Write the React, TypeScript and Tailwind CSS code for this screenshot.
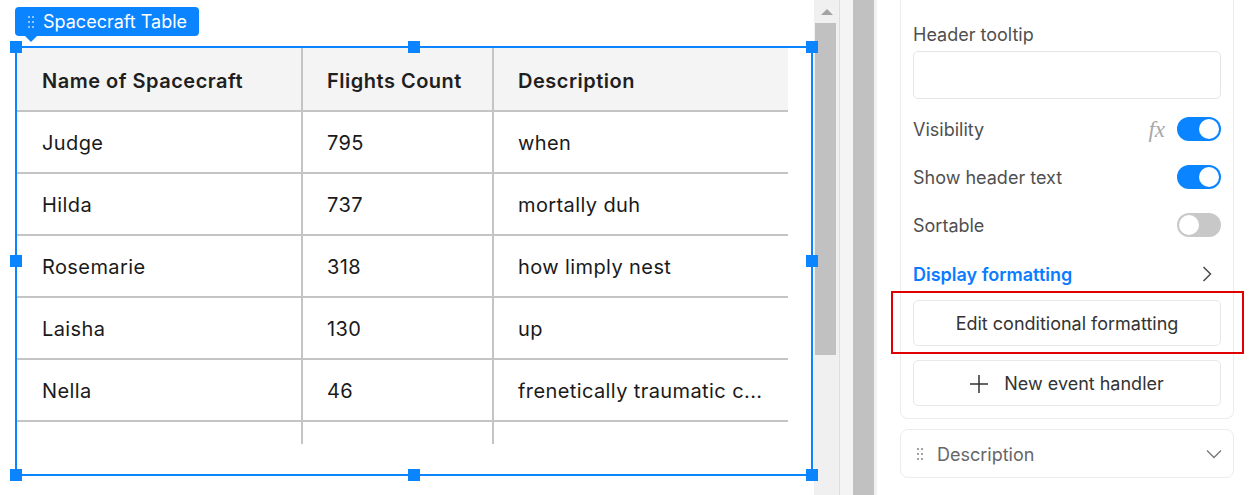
const rows = [
  { name: "Judge", count: "795", desc: "when" },
  { name: "Hilda", count: "737", desc: "mortally duh" },
  { name: "Rosemarie", count: "318", desc: "how limply nest" },
  { name: "Laisha", count: "130", desc: "up" },
  { name: "Nella", count: "46", desc: "frenetically traumatic c..." },
  { name: "", count: "", desc: "" },
];

function DragDots({ className = "" }: { className?: string }) {
  return (
    <svg width="6" height="12" viewBox="0 0 6 12" className={className}>
      {[1, 6, 11].map((y) => (
        <g key={y}>
          <circle cx="1" cy={y} r="0.9" fill="currentColor" />
          <circle cx="5" cy={y} r="0.9" fill="currentColor" />
        </g>
      ))}
    </svg>
  );
}

function Toggle({ on }: { on: boolean }) {
  return (
    <div
      className={`w-[44px] h-[24px] rounded-full flex items-center px-[2px] ${
        on ? "bg-[#0a84ff] justify-end" : "bg-[#c8c8c8] justify-start"
      }`}
    >
      <div className="w-[20px] h-[20px] rounded-full bg-white" />
    </div>
  );
}

function Handle({ className }: { className: string }) {
  return <div className={`absolute w-[12px] h-[12px] bg-[#0a84ff] ${className}`} />;
}

export default function App() {
  return (
    <div
      className="flex w-[1260px] h-[495px] overflow-hidden bg-white text-[#1a1a1a]"
      style={{ fontFamily: "Inter, 'Noto Sans', sans-serif" }}
    >
      {/* Canvas */}
      <div className="w-[814px] shrink-0 flex flex-col pl-[15px] pt-[7px]">
        {/* Component tag */}
        <div className="relative w-fit">
          <div className="h-[29px] w-[184px] rounded-[4px] bg-[#0a84ff] text-white flex items-center pl-[13px] gap-[9px] text-[18px]">
            <DragDots className="text-white/80" />
            <span>Spacecraft Table</span>
          </div>
          <div className="absolute left-[10px] top-[29px] w-0 h-0 border-l-[6px] border-r-[6px] border-t-[6px] border-l-transparent border-r-transparent border-t-[#0a84ff]" />
        </div>

        {/* Selection frame */}
        <div className="relative mt-[10px] w-[798px] h-[430px] border-2 border-[#0a84ff]">
          <div className="w-[771px] h-[396px] overflow-hidden">
            <div className="flex h-[64px] bg-[#f4f4f4] border-b-2 border-[#c4c4c4] font-semibold text-[20px] tracking-[0.025em] text-[#1f1f1f]">
              <div className="w-[286px] border-r-2 border-[#c4c4c4] flex items-center pl-[25px] pt-[3px]">
                Name of Spacecraft
              </div>
              <div className="w-[191px] border-r-2 border-[#c4c4c4] flex items-center pl-[24px] pt-[3px]">
                Flights Count
              </div>
              <div className="flex-1 flex items-center pl-[24px] pt-[3px]">Description</div>
            </div>
            {rows.map((r, i) => (
              <div key={i} className="flex h-[62px] border-b-2 border-[#c4c4c4] text-[20px] tracking-[0.02em]">
                <div className="w-[286px] border-r-2 border-[#c4c4c4] flex items-center pl-[25px] pt-[2px]">
                  {r.name}
                </div>
                <div className="w-[191px] border-r-2 border-[#c4c4c4] flex items-center pl-[24px] pt-[2px]">
                  {r.count}
                </div>
                <div className="flex-1 flex items-center pl-[24px] pt-[2px] whitespace-nowrap">{r.desc}</div>
              </div>
            ))}
          </div>
          <Handle className="-left-[7px] -top-[7px]" />
          <Handle className="left-[391px] -top-[7px]" />
          <Handle className="-right-[7px] -top-[7px]" />
          <Handle className="-left-[7px] top-[207px]" />
          <Handle className="-right-[7px] top-[207px]" />
          <Handle className="-left-[7px] -bottom-[7px]" />
          <Handle className="left-[391px] -bottom-[7px]" />
          <Handle className="-right-[7px] -bottom-[7px]" />
        </div>
      </div>

      {/* Canvas scrollbar */}
      <div className="w-[25px] shrink-0 bg-[#f0f0f0] flex flex-col items-center">
        <div className="h-[23px] flex items-center">
          <div className="w-0 h-0 border-l-[6px] border-r-[6px] border-b-[6px] border-l-transparent border-r-transparent border-b-[#a3a3a3]" />
        </div>
        <div className="w-[21px] h-[332px] bg-[#c1c1c1] -ml-[2px]" />
      </div>

      {/* Gutter */}
      <div className="w-[38px] shrink-0 flex border-l border-[#dedede]">
        <div className="w-[13px] bg-[#f4f4f4]" />
        <div className="w-[21px] bg-[#c1c1c1]" />
        <div className="w-[3px] bg-[#f2f2f2]" />
      </div>

      {/* Right panel */}
      <div className="flex-1 pl-[23px] pr-[26px] text-[18px] text-[#4f4f4f]">
        <div className="relative border border-t-0 border-[#ececec] rounded-b-[8px] px-[12px] pb-[12px] pt-[21px]">
          <div className="h-[26px] flex items-center">Header tooltip</div>
          <div className="mt-[4px] h-[48px] rounded-[5px] border border-[#e6e6e6]" />

          <div className="mt-[6px] h-[48px] flex items-center justify-between">
            <span className="pt-[1px]">Visibility</span>
            <div className="flex items-center gap-[12px]">
              <span
                className="italic text-[23px] text-[#a8a8a8] pt-[2px]"
                style={{ fontFamily: "'Liberation Serif', serif" }}
              >
                fx
              </span>
              <Toggle on />
            </div>
          </div>
          <div className="h-[48px] flex items-center justify-between">
            <span className="pt-[1px]">Show header text</span>
            <Toggle on />
          </div>
          <div className="h-[48px] flex items-center justify-between">
            <span className="pt-[1px]">Sortable</span>
            <Toggle on={false} />
          </div>
          <div className="h-[49px] flex items-center justify-between">
            <span className="font-semibold text-[#0a7cff] pt-[2px]">Display formatting</span>
            <svg width="12" height="18" viewBox="0 0 12 18" className="mr-[8px] mt-[1px]">
              <path d="M2.5 2 L9.5 9 L2.5 16" fill="none" stroke="#4a4a4a" strokeWidth="1.5" />
            </svg>
          </div>

          <div className="mt-[2px] h-[46px] rounded-[5px] border border-[#e8e8e8] flex items-center justify-center text-[#333] pt-[1px]">
            Edit conditional formatting
          </div>
          <div className="mt-[14px] h-[46px] rounded-[5px] border border-[#e8e8e8] flex items-center justify-center gap-[16px] text-[#333] pt-[1px]">
            <svg width="18" height="18" viewBox="0 0 18 18">
              <path d="M9 0 V18 M0 9 H18" fill="none" stroke="#333" strokeWidth="1.5" />
            </svg>
            <span>New event handler</span>
          </div>

          {/* Highlight annotation */}
          <div className="absolute left-[-10px] right-[-11px] top-[291px] h-[63px] border-2 border-[#e00000]" />
        </div>

        <div className="mt-[10px] h-[49px] border border-[#ececec] rounded-[8px] flex items-center pl-[16px] pr-[11px] text-[#666]">
          <DragDots className="text-[#777]" />
          <span className="ml-[14px] flex-1 pt-[2px]">Description</span>
          <svg width="16" height="10" viewBox="0 0 16 10">
            <path d="M1 1.5 L8 8.5 L15 1.5" fill="none" stroke="#777" strokeWidth="1.3" />
          </svg>
        </div>
      </div>
    </div>
  );
}
